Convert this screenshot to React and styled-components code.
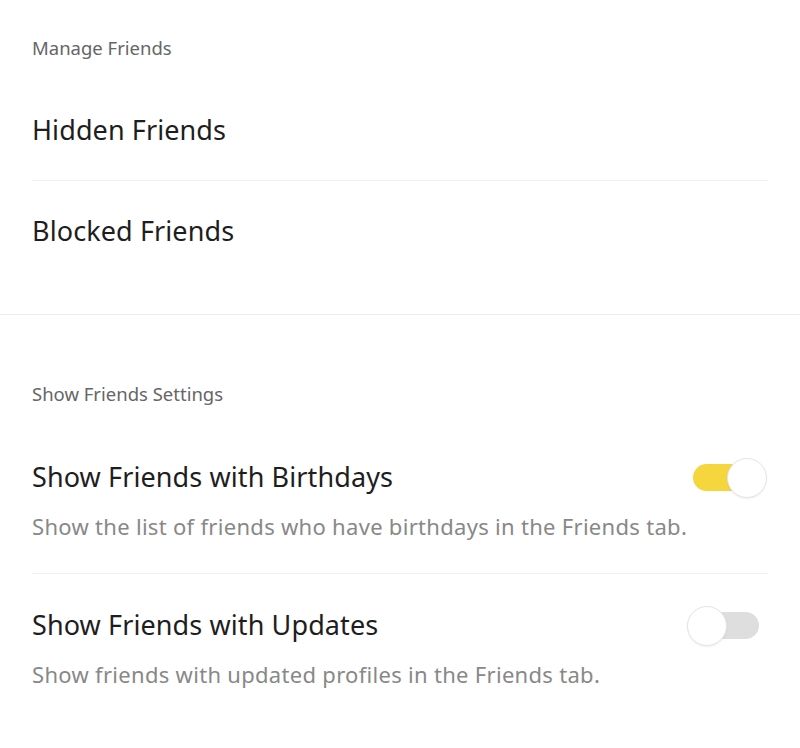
import { useState } from "react";
import styled, { createGlobalStyle } from "styled-components";

const GlobalStyle = createGlobalStyle`
  html, body {
    margin: 0;
    padding: 0;
    background: #ffffff;
  }
  body {
    font-family: "Noto Sans", "Open Sans", sans-serif;
    -webkit-font-smoothing: antialiased;
  }
`;

const Page = styled.div`
  width: 800px;
  height: 748px;
  overflow: hidden;
  background: #fff;
`;

const Section = styled.section`
  padding: ${(p) => p.$top}px 32px ${(p) => p.$bottom}px;
  border-bottom: ${(p) => (p.$divider ? "1px solid #ececec" : "none")};
`;

const SectionTitle = styled.h2`
  margin: 0 0 19px;
  font-size: 18.5px;
  font-weight: 400;
  color: #666;
  line-height: 26px;
`;

const List = styled.ul`
  list-style: none;
  margin: 0;
  padding: 0;
`;

const MenuItem = styled.li`
  display: flex;
  align-items: center;
  height: 100px;
  border-bottom: ${(p) => (p.$last ? "none" : "1px solid #f1f1f1")};
`;

const SettingItem = styled.li`
  display: flex;
  flex-direction: column;
  gap: 19px;
  padding: 35px 0 33px;
  border-bottom: ${(p) => (p.$last ? "none" : "1px solid #f1f1f1")};
`;

const TitleRow = styled.div`
  display: flex;
  align-items: center;
  justify-content: space-between;
  height: 32px;
`;

const ItemTitle = styled.div`
  font-size: 27px;
  letter-spacing: 0.1px;
  color: #1e1e1e;
  line-height: 32px;
`;

const ItemDesc = styled.div`
  font-size: 22px;
  letter-spacing: 0.3px;
  color: #888;
  line-height: 28px;
`;

const Track = styled.button`
  position: relative;
  width: 66px;
  height: 27px;
  border: none;
  padding: 0;
  border-radius: 14px;
  margin-right: 9px;
  background: ${(p) => (p.$on ? "#f5d63d" : "#dedede")};
  cursor: pointer;
  flex-shrink: 0;
`;

const Thumb = styled.span`
  position: absolute;
  top: -6px;
  left: ${(p) => (p.$on ? "34px" : "-6px")};
  width: 40px;
  height: 40px;
  box-sizing: border-box;
  border-radius: 50%;
  background: #fff;
  border: 1px solid #e4e4e4;
  box-shadow: 0 1px 2px rgba(0, 0, 0, 0.06);
`;

const Toggle = ({ on, onClick }) => (
  <Track $on={on} onClick={onClick}>
    <Thumb $on={on} />
  </Track>
);

export default function App() {
  const [birthdays, setBirthdays] = useState(true);
  const [updates, setUpdates] = useState(false);

  return (
    <Page>
      <GlobalStyle />
      <Section $divider $top={35} $bottom={33}>
        <SectionTitle>Manage Friends</SectionTitle>
        <List>
          <MenuItem>
            <ItemTitle>Hidden Friends</ItemTitle>
          </MenuItem>
          <MenuItem $last>
            <ItemTitle>Blocked Friends</ItemTitle>
          </MenuItem>
        </List>
      </Section>
      <Section $top={66} $bottom={0}>
        <SectionTitle>Show Friends Settings</SectionTitle>
        <List>
          <SettingItem>
            <TitleRow>
              <ItemTitle>Show Friends with Birthdays</ItemTitle>
              <Toggle on={birthdays} onClick={() => setBirthdays(!birthdays)} />
            </TitleRow>
            <ItemDesc>
              Show the list of friends who have birthdays in the Friends tab.
            </ItemDesc>
          </SettingItem>
          <SettingItem $last>
            <TitleRow>
              <ItemTitle>Show Friends with Updates</ItemTitle>
              <Toggle on={updates} onClick={() => setUpdates(!updates)} />
            </TitleRow>
            <ItemDesc>
              Show friends with updated profiles in the Friends tab.
            </ItemDesc>
          </SettingItem>
        </List>
      </Section>
    </Page>
  );
}
